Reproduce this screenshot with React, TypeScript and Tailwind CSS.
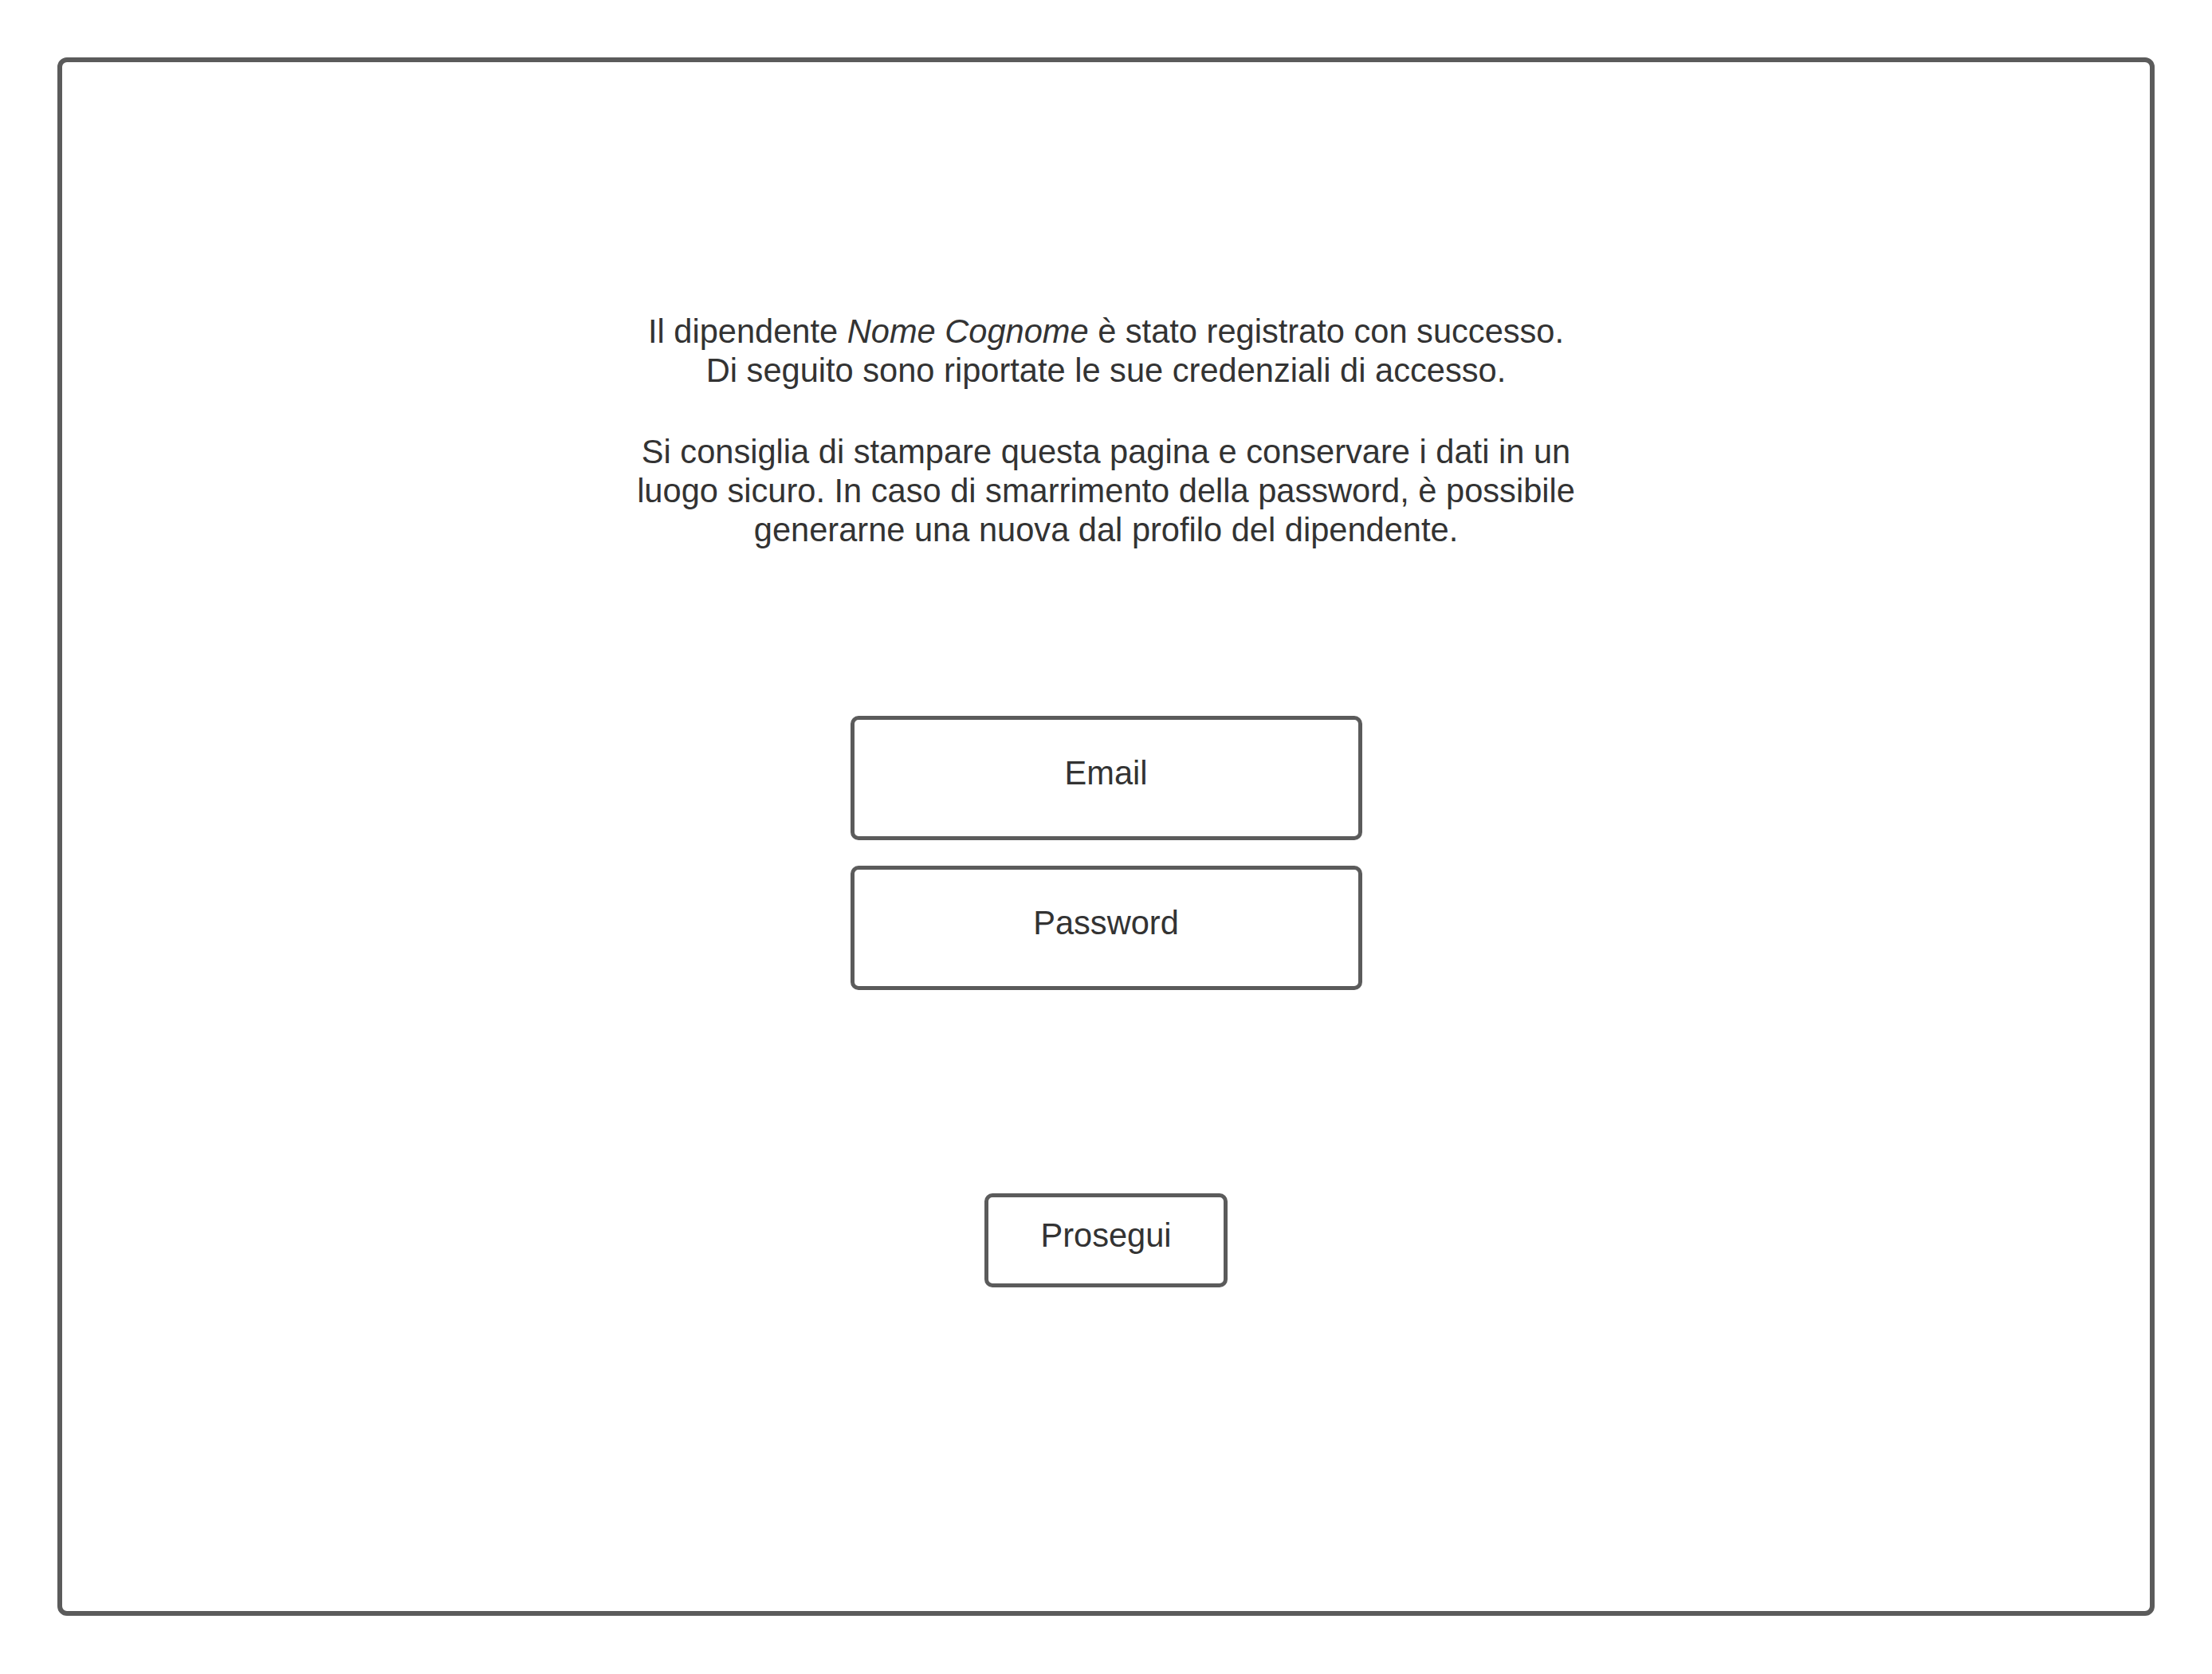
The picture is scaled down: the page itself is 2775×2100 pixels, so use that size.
const Field = ({ label }: { label: string }) => (
    <div className="flex h-[156px] w-[642px] items-center justify-center rounded-[10px] border-[5px] border-[#5b5b5b] pb-[12px]">
        <span>{label}</span>
    </div>
)

const App = () => {
    return (
        <div className="min-h-screen bg-white pl-[72px] pt-[72px] text-[41.6px] text-[#333333] [font-family:'Liberation_Sans',Arial,sans-serif]">
            <div className="flex h-[1955px] w-[2631px] flex-col items-center rounded-[12px] border-[6px] border-[#5b5b5b] pt-[313px]">
                <div className="text-center leading-[49.3px]">
                    <p>
                        Il dipendente <i>Nome Cognome</i> è stato registrato con successo.
                        <br />
                        Di seguito sono riportate le sue credenziali di accesso.
                    </p>
                    <p className="mt-[52px]">
                        Si consiglia di stampare questa pagina e conservare i dati in un
                        <br />
                        luogo sicuro. In caso di smarrimento della password, è possibile
                        <br />
                        generarne una nuova dal profilo del dipendente.
                    </p>
                </div>

                <div className="mt-[209px] flex flex-col gap-[32px]">
                    <Field label="Email" />
                    <Field label="Password" />
                </div>

                <button className="mt-[255px] flex h-[118px] w-[305px] items-center justify-center rounded-[10px] border-[5px] border-[#5b5b5b] pb-[12px]">
                    Prosegui
                </button>
            </div>
        </div>
    )
}

export default App
